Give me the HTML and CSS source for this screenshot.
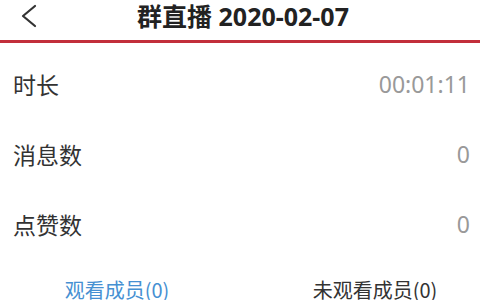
FILE: index.html
```html
<!DOCTYPE html>
<html lang="zh-CN">

<head>
    <meta charset="UTF-8">
    <meta name="viewport" content="width=device-width, initial-scale=1.0">
    <title>群直播 2020-02-07</title>
    <link rel="stylesheet" href="styles.css">
</head>

<body>
    <div class="header">
        <div class="back">
            <svg width="20" height="26" viewBox="0 0 20 26">
                <polyline points="15,3 3,13 15,23" fill="none" stroke="#333" stroke-width="2.2" stroke-linecap="round" stroke-linejoin="round"/>
            </svg>
        </div>
        <h1 class="title">群直播 2020-02-07</h1>
        <div></div>
    </div>

    <div class="list">
        <div class="row">
            <span class="label">时长</span>
            <span class="value">00:01:11</span>
        </div>
        <div class="row">
            <span class="label">消息数</span>
            <span class="value">0</span>
        </div>
        <div class="row">
            <span class="label">点赞数</span>
            <span class="value">0</span>
        </div>
    </div>

    <!-- 成员标签 -->
    <div class="tabs">
        <div class="tab active">观看成员(0)</div>
        <div class="tab tab-right">未观看成员(0)</div>
    </div>
</body>

</html>
```

FILE: styles.css
```css
body {
    margin: 0;
    background-color: #fff;
    font-family: "Noto Sans CJK SC", "Noto Sans", sans-serif;
    color: #333;
    overflow: hidden;
}

.header {
    display: grid;
    grid-template-columns: 1fr auto 1fr;
    align-items: center;
    height: 32px;
    padding-bottom: 8px;
    border-bottom: 3px solid #c22f3b;
}

.back {
    display: flex;
    align-items: center;
    padding-left: 20px;
}

.back svg {
    display: block;
}

.title {
    margin: 0;
    padding-left: 6px;
    font-size: 25px;
    font-weight: bold;
    line-height: 32px;
    color: #222;
    font-family: "Noto Sans", "Noto Sans CJK SC", sans-serif;
}

.list {
    padding-top: 6px;
}

.row {
    display: flex;
    align-items: center;
    justify-content: space-between;
    height: 70px;
    padding: 0 10px 0 13px;
}

.label {
    font-size: 23px;
    color: #333;
}

.value {
    font-size: 23px;
    color: #999;
    font-family: "Noto Sans", "Noto Sans CJK SC", sans-serif;
}

.tabs {
    display: grid;
    grid-template-columns: 1fr 1fr;
    align-items: center;
    height: 60px;
}

.tab {
    text-align: center;
    font-size: 20px;
    color: #333;
}

.tab.active {
    color: #4690d2;
    padding-right: 6px;
}

.tab-right {
    padding-left: 30px;
}
```
